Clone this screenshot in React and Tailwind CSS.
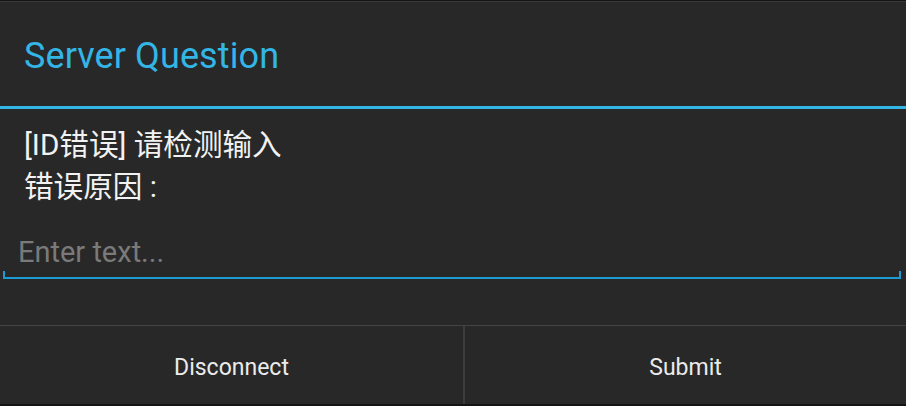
import React from "react";

export default function App() {
  const font = { fontFamily: 'Roboto, "Noto Sans CJK SC", sans-serif' };
  return (
    <div className="w-[906px] h-[406px] bg-[#282828] flex flex-col overflow-hidden" style={font}>
      <div className="h-px bg-[#141414]" />
      <div className="h-px bg-[#3a3a3a]" />
      <div className="h-[104px] flex items-center px-6 pt-[4px]">
        <span className="text-[36px] leading-none tracking-[0.1px] text-[#33b5e5]">Server Question</span>
      </div>
      <div className="h-[3px] bg-[#33b5e5]" />
      <div className="pt-[15px] px-6 text-[29.6px] leading-[42px] text-[#f2f2f2]">
        <div>[ID错误] 请检测输入</div>
        <div>错误原因 :</div>
      </div>
      <div className="mt-[25px] ml-[3px] mr-[5px] flex flex-col">
        <div className="h-[38px] leading-[38px] pl-[15px] text-[29px] text-[#7a7a7a]">Enter text...</div>
        <div className="h-[8px] border-x-2 border-b-2 border-[#1b9bd1]" />
      </div>
      <div className="mt-[46px] h-px bg-[#444444]" />
      <div className="flex h-[78px]">
        <div className="w-[463px] flex items-center justify-center pt-[6px] text-[23px] text-[#ebebeb]">Disconnect</div>
        <div className="w-[2px] bg-[#3c3c3c]" />
        <div className="flex-1 flex items-center justify-center pt-[6px] text-[23px] text-[#ebebeb]">Submit</div>
      </div>
      <div className="h-[2px] bg-[#141414]" />
    </div>
  );
}
